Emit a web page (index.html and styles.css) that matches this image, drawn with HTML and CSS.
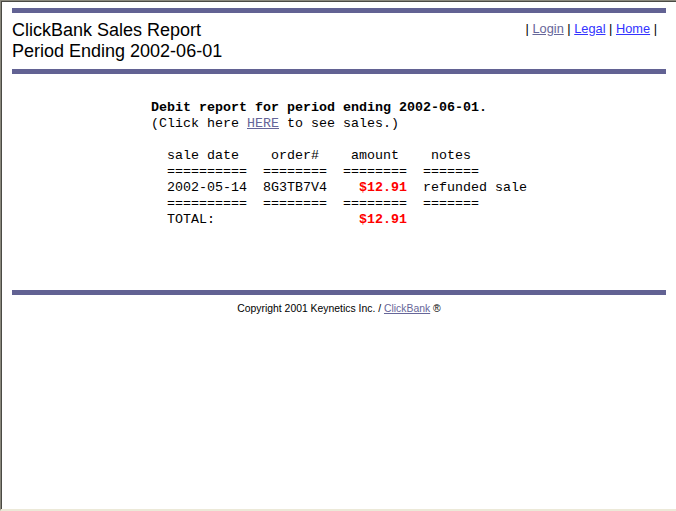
FILE: index.html
```html
<!DOCTYPE html>
<html>
<head>
<meta charset="utf-8">
<title>ClickBank Sales Report</title>
<link rel="stylesheet" href="styles.css">
</head>
<body>
<div class="frame">
  <div class="page">
    <div class="bar"></div>
    <div class="header">
      <div class="title">ClickBank Sales Report<br>Period Ending 2002-06-01</div>
      <div class="nav">| <a href="#" class="link-visited">Login</a> | <a href="#" class="link">Legal</a> | <a href="#" class="link">Home</a> |</div>
    </div>
    <div class="bar"></div>
    <div class="report">
<pre class="report-text"><b>Debit report for period ending 2002-06-01.</b>
(Click here <a href="#" class="link-visited">HERE</a> to see sales.)

  sale date    order#    amount    notes
  ==========  ========  ========  =======
  2002-05-14  8G3TB7V4    <b class="money">$12.91</b>  refunded sale
  ==========  ========  ========  =======
  TOTAL:                  <b class="money">$12.91</b></pre>
    </div>
    <div class="bar"></div>
    <p class="copyright">Copyright 2001 Keynetics Inc. / <a href="#" class="link-visited">ClickBank</a> &reg;</p>
  </div>
</div>
</body>
</html>
```

FILE: styles.css
```css
html, body {
  margin: 0;
  padding: 0;
  background: #ffffff;
}

.frame {
  height: 511px;
  box-sizing: border-box;
  border-top: 1px solid #8a887c;
  border-left: 1px solid #8a887c;
  border-bottom: 2px solid #ece9d8;
  box-shadow: inset 1px 1px 0 #4a4a44;
  padding: 1px 0 0 1px;
}

.page {
  padding: 6px 10px 0 10px;
}

.bar {
  height: 5px;
  background: #626293;
}

.header {
  display: flex;
  justify-content: space-between;
  align-items: flex-start;
  padding: 7px 0;
}

.title {
  font-family: "Liberation Sans", Arial, sans-serif;
  font-size: 18px;
  line-height: 21px;
  color: #000000;
}

.nav {
  font-family: "Liberation Sans", Arial, sans-serif;
  font-size: 12.8px;
  line-height: 16px;
  margin-top: 1px;
  padding-right: 9px;
  color: #000000;
}

.link {
  color: #3333ff;
  text-decoration: underline;
}

.link-visited {
  color: #666699;
  text-decoration: underline;
}

.report {
  display: flex;
  justify-content: center;
  padding-top: 26px;
  margin-bottom: 62px;
}

.report-text {
  margin: 0;
  font-family: "Liberation Mono", "Courier New", monospace;
  font-size: 13.333px;
  line-height: 16px;
  color: #000000;
}

.money {
  color: #ff0000;
}

.copyright {
  margin: 7px 0 0 0;
  text-align: center;
  font-family: "Liberation Sans", Arial, sans-serif;
  font-size: 10.4px;
  line-height: 13px;
  color: #000000;
}
```
